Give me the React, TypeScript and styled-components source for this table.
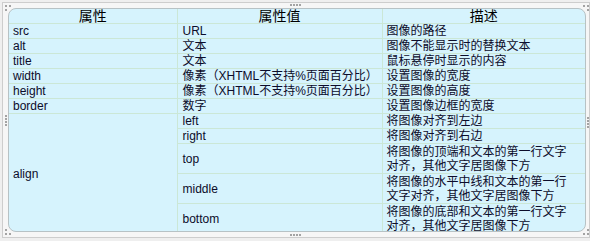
import React, { FC } from 'react';
import styled, { createGlobalStyle } from 'styled-components';

const GlobalStyle = createGlobalStyle`
  html, body {
    margin: 0;
    padding: 0;
    background: #efefef;
  }
  body {
    font-family: "Liberation Sans", "Noto Sans CJK SC", sans-serif;
    color: #000;
  }
`;

const Frame = styled.div`
  position: relative;
  box-sizing: border-box;
  width: 588px;
  height: 236px;
  margin: 2px 0 0 2px;
  padding: 5px 3px 5px 5px;
  border: 1px solid #cdcdcd;
  background: #f6f6f6;
`;

const Panel = styled.div`
  box-sizing: border-box;
  height: 224px;
  border: 1px solid #b7c2c5;
  border-radius: 8px;
  overflow: hidden;
  background: #d6f3fd;
`;

const Table = styled.table`
  width: 100%;
  table-layout: fixed;
  border-collapse: collapse;
  border-style: hidden;
`;

const HeadCell = styled.th`
  height: 14px;
  padding: 0;
  border: 1px solid #cbe7d6;
  font-size: 14px;
  font-weight: normal;
  line-height: 14px;
  text-align: center;
`;

const Cell = styled.td<{ $pad?: number }>`
  padding: 0 4px 0 ${(p) => p.$pad ?? 4}px;
  border: 1px solid #cbe7d6;
  font-size: 12px;
  line-height: 14px;
  vertical-align: middle;
  text-align: left;
  color: #0c0c2a;
`;

const TallCell = styled(Cell)`
  height: 29px;
  padding-right: 14px;
`;

const Grip = styled.span<{ $vertical?: boolean }>`
  position: absolute;
  width: ${(p) => (p.$vertical ? '2px' : '11px')};
  height: ${(p) => (p.$vertical ? '11px' : '2px')};
  background: repeating-linear-gradient(
    ${(p) => (p.$vertical ? '180deg' : '90deg')},
    #a3a3a3 0 2px,
    transparent 2px 3px
  );
`;

const Corner = styled.span<{ $x: number; $y: number }>`
  position: absolute;
  width: 2px;
  height: 2px;
  background: #a3a3a3;
  box-shadow: ${(p) => `${p.$x}px 0 #a3a3a3, 0 ${p.$y}px #a3a3a3`};
`;

interface Row {
  name: string;
  value: string;
  desc: string;
}

const rows: Row[] = [
  { name: 'src', value: 'URL', desc: '图像的路径' },
  { name: 'alt', value: '文本', desc: '图像不能显示时的替换文本' },
  { name: 'title', value: '文本', desc: '鼠标悬停时显示的内容' },
  { name: 'width', value: '像素（XHTML不支持%页面百分比）', desc: '设置图像的宽度' },
  { name: 'height', value: '像素（XHTML不支持%页面百分比）', desc: '设置图像的高度' },
  { name: 'border', value: '数字', desc: '设置图像边框的宽度' },
];

const alignRows = [
  { value: 'left', desc: '将图像对齐到左边', tall: false },
  { value: 'right', desc: '将图像对齐到右边', tall: false },
  { value: 'top', desc: '将图像的顶端和文本的第一行文字对齐，其他文字居图像下方', tall: true },
  { value: 'middle', desc: '将图像的水平中线和文本的第一行文字对齐，其他文字居图像下方', tall: true },
  { value: 'bottom', desc: '将图像的底部和文本的第一行文字对齐，其他文字居图像下方', tall: true },
];

const App: FC = () => {
  return (
    <>
      <GlobalStyle />
      <Frame>
        <Panel>
          <Table>
            <colgroup>
              <col style={{ width: 168 }} />
              <col style={{ width: 205 }} />
              <col />
            </colgroup>
            <thead>
              <tr>
                <HeadCell>属性</HeadCell>
                <HeadCell>属性值</HeadCell>
                <HeadCell>描述</HeadCell>
              </tr>
            </thead>
            <tbody>
              {rows.map((r) => (
                <tr key={r.name}>
                  <Cell>{r.name}</Cell>
                  <Cell $pad={5}>{r.value}</Cell>
                  <Cell>{r.desc}</Cell>
                </tr>
              ))}
              {alignRows.map((r, i) => (
                <tr key={r.value}>
                  {i === 0 && <Cell rowSpan={alignRows.length}>align</Cell>}
                  {r.tall ? (
                    <>
                      <TallCell $pad={5}>{r.value}</TallCell>
                      <TallCell>{r.desc}</TallCell>
                    </>
                  ) : (
                    <>
                      <Cell $pad={5}>{r.value}</Cell>
                      <Cell>{r.desc}</Cell>
                    </>
                  )}
                </tr>
              ))}
            </tbody>
          </Table>
        </Panel>
        <Grip style={{ left: 287, top: 1 }} />
        <Grip style={{ left: 287, bottom: 1 }} />
        <Grip $vertical style={{ left: 2, top: 112 }} />
        <Grip $vertical style={{ right: 0, top: 114 }} />
        <Corner $x={4} $y={4} style={{ left: 2, top: 2 }} />
        <Corner $x={-4} $y={4} style={{ right: 0, top: 2 }} />
        <Corner $x={4} $y={-4} style={{ left: 2, bottom: 2 }} />
        <Corner $x={-4} $y={-4} style={{ right: 0, bottom: 2 }} />
      </Frame>
    </>
  );
};

export default App;
